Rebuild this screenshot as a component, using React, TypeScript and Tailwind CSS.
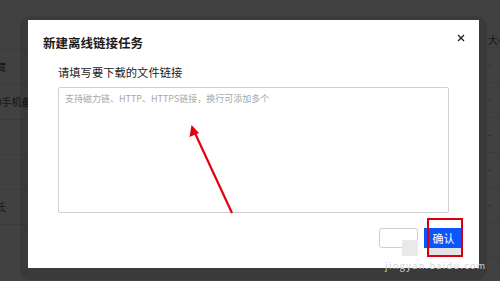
import React from 'react';

const rows = ['藏', '9手机备', '', '', '氏'];

export default function App() {
  return (
    <div
      className="relative w-[500px] h-[281px] overflow-hidden bg-[#414141] text-[#111]"
      style={{ fontFamily: '"Noto Sans CJK SC", "Noto Sans", sans-serif' }}
    >
      {/* page behind the overlay */}
      <div className="flex h-full pt-[31px]">
        <div className="w-[40px] flex flex-col mt-[18px] border-t border-[#3b3b3b]">
          {rows.map((r, i) => (
            <div key={i} className="h-[35px] border-b border-[#3b3b3b] flex items-center text-[10px] text-[#161616] leading-none -ml-[4px]">
              {r}
            </div>
          ))}
        </div>
        <div className="flex-1" />
        <div className="w-[13px] flex flex-col">
          <div className="h-[17px] text-[10px] text-[#161616] leading-none whitespace-nowrap pl-[1px] pt-[4px] border-b border-[#3b3b3b]">大小</div>
          {[0, 1, 2, 3, 4, 5].map(i => (
            <div key={i} className="h-[35px] border-b border-[#3b3b3b] flex items-center pl-[1px] text-[8px] text-[#111] leading-none">
              {i < 5 ? '-' : ''}
            </div>
          ))}
        </div>
      </div>

      {/* modal */}
      <div className="absolute left-[20px] top-[16px] w-[467px] h-[264px] rounded-[10px] bg-black/10 pl-[8px] pt-[4px]">
        <div className="relative w-[451px] h-[248px] bg-white flex flex-col">
          <div className="flex items-center justify-between pl-[15px] pr-[14px] pt-[14px] h-[32px]">
            <h1 className="text-[12.5px] font-bold text-[#1a1a1a] leading-none">新建离线链接任务</h1>
            <svg width="8" height="8" viewBox="0 0 8 8" className="-mt-[11px]">
              <path d="M1 1L7 7M7 1L1 7" stroke="#222" strokeWidth="1.4" />
            </svg>
          </div>
          <div className="px-[30px] flex flex-col">
            <label className="mt-[15px] text-[11.3px] text-[#222] leading-none">请填写要下载的文件链接</label>
            <div className="mt-[9px] h-[126px] border border-[#d0d0d0] rounded-[2px] px-[6px] pt-[6px] text-[9px] leading-none">
              <span className="text-[#a8a8a8]">支持磁力链、HTTP、HTTPS链接，换行可添加多个</span>
            </div>
          </div>
          <div className="flex justify-end gap-[6px] pr-[16px] mt-[15px]">
            <button className="w-[39px] h-[20px] border border-[#cfcfcf] rounded-[3px] bg-white" />
            <button className="w-[39px] h-[20px] bg-[#0c55fb] text-white text-[11px] leading-none">确认</button>
          </div>
          <div className="absolute left-[374px] top-[220px] w-[16px] h-[16px] bg-[#e9e9e9]" />
          <div className="absolute left-[399px] top-[228px] w-[35px] h-[8px] bg-[#d9d9d9] opacity-70" />
          <div className="absolute left-[357px] top-[241px] text-[9px] text-[#d4d4d4] leading-none tracking-[1.4px]">jingyan.baidu.com</div>
        </div>
      </div>

      {/* annotations */}
      <div className="absolute left-[427px] top-[218px] w-[36px] h-[39px] border-2 border-[#d8000f]" />
      <svg className="absolute left-0 top-0" width="500" height="281" viewBox="0 0 500 281">
        <line x1="232" y1="213" x2="194" y2="131" stroke="#e0000e" strokeWidth="2.2" />
        <polygon points="191.5,125 189.5,137 199,133" fill="#e0000e" />
      </svg>
    </div>
  );
}
